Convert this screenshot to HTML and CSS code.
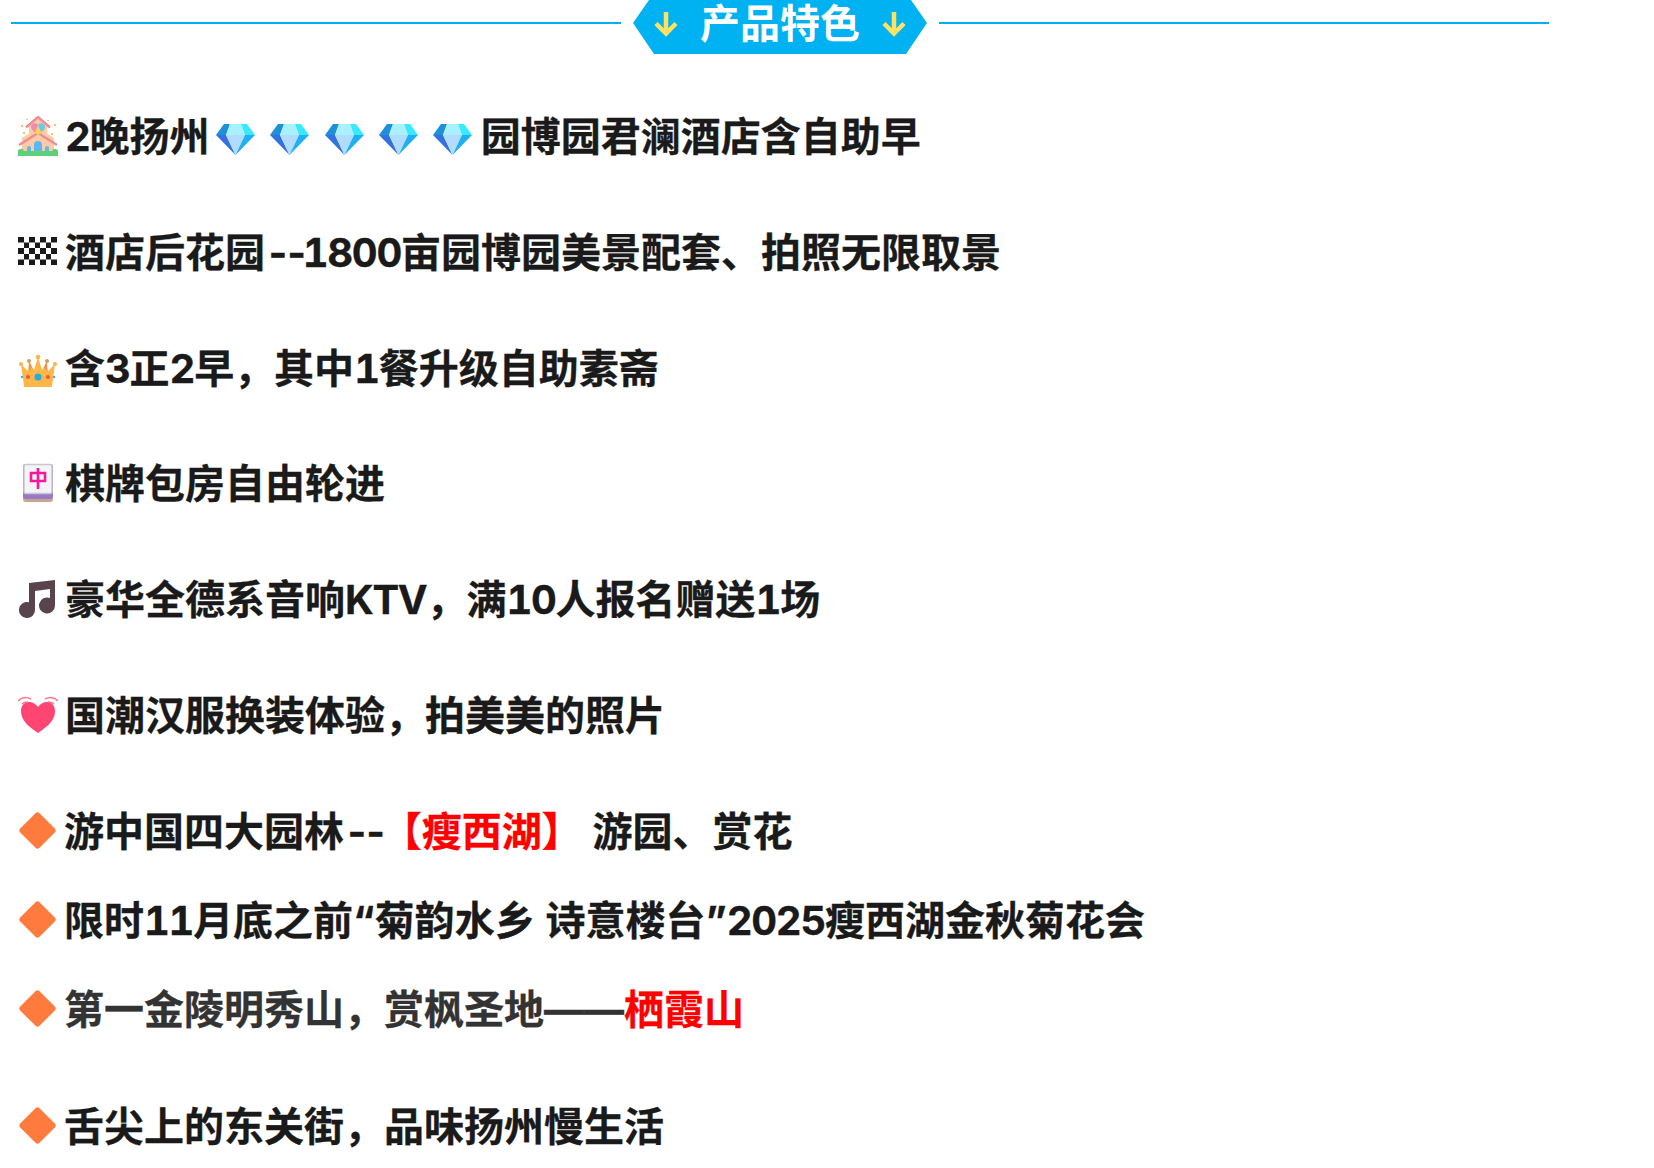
FILE: index.html
```html
<!DOCTYPE html>
<html lang="zh-CN">
<head>
<meta charset="utf-8">
<title>产品特色</title>
<link rel="stylesheet" href="styles.css">
</head>
<body>
<svg class="defs" width="0" height="0" aria-hidden="true">
  <symbol id="gem" viewBox="0 0 39 31">
    <polygon points="8,0 14,0 10,11 0,11" fill="#1c91d9"/>
    <polygon points="14,0 25,0 29,11 10,11" fill="#a9f1ff"/>
    <polygon points="25,0 31,0 39,11 29,11" fill="#39e9ff"/>
    <polygon points="0,11 10,11 19.5,31" fill="#3370e0"/>
    <polygon points="10,11 29,11 19.5,31" fill="#b1dcff"/>
    <polygon points="29,11 39,11 19.5,31" fill="#1eb0f0"/>
  </symbol>
  <symbol id="rhomb" viewBox="0 0 37 37">
    <path d="M16.5 1.2a3 3 0 0 1 4 0L35.8 16.500a3 3 0 0 1 0 4L20.500 35.800a3 3 0 0 1-4 0L1.200 20.500a3 3 0 0 1 0-4Z" fill="#ff7b3d"/>
  </symbol>
  <symbol id="arrow" viewBox="0 0 24 26">
    <path d="M12 1V22" fill="none" stroke="#ffe164" stroke-width="4.500"/>
    <path d="M2 12.500l10 10 10-10" fill="none" stroke="#ffe164" stroke-width="4.500"/>
  </symbol>
</svg>

<header class="banner">
  <span class="rule"></span>
  <h1 class="badge">
    <svg class="arrow"><use href="#arrow"/></svg>
    <span>产品特色</span>
    <svg class="arrow"><use href="#arrow"/></svg>
  </h1>
  <span class="rule"></span>
</header>

<main class="features">
  <p class="row gap">
    <svg class="icon" viewBox="0 0 40 40">
      <path d="M4 37V22L20 12l16 10v15Z" fill="#fdcba4"/>
      <path d="M11 20V10l9-8 9 8v10l-9-5Z" fill="#fdcba4"/>
      <path d="M8 11.500 20 1l12 10.500" fill="none" stroke="#ee8d98" stroke-width="2.500"/>
      <path d="M1 29 20 17l19 12" fill="none" stroke="#ee8d98" stroke-width="2.500"/>
      <path d="M20 9c-2-3-7-2-7 2s4 6 7 8c3-2 7-4 7-8s-5-5-7-2Z" fill="#fbd15b"/>
      <path d="M20 9c-2-3-7-2-7 2 0 2 2 4 4 5Z" fill="#f28bb4"/>
      <path d="M20 9c2-3 7-2 7 2 0 2-2 4-4 5Z" fill="#6cc8f0"/>
      <path d="M16 38V29a4 4 0 0 1 8 0v9ZM9 38v-6a2 2 0 0 1 4 0v6ZM27 38v-6a2 2 0 0 1 4 0v6Z" fill="#5cb8f5"/>
      <path d="M0 40v-3a3 3 0 0 1 6-2h28a3 3 0 0 1 6 2v3Z" fill="#5fd07a"/>
      <path d="M3 9h2v2H3ZM36 8h2v2h-2ZM5 16h2v2H5ZM33 17h2v2h-2ZM8 3h2v1H8ZM29 4h2v1h-2Z" fill="#f7c35f"/>
    </svg>
    <span class="text"><span class="num">2</span>晚扬州</span>
    <span class="gems">
      <svg class="gem"><use href="#gem"/></svg>
      <svg class="gem"><use href="#gem"/></svg>
      <svg class="gem"><use href="#gem"/></svg>
      <svg class="gem"><use href="#gem"/></svg>
      <svg class="gem"><use href="#gem"/></svg>
    </span>
    <span class="text">园博园君澜酒店含自助早</span>
  </p>
  <p class="row gap">
    <svg class="icon" viewBox="0 0 40 40">
      <path fill="#1a1a1a" d="M0 6h6v5.500H0ZM11 6h6v5.500h-6ZM22 6h6v5.500h-6ZM33 6h6v5.500h-6ZM6 11.500h5V17H6ZM17 11.500h5V17h-5ZM28 11.500h5V17h-5ZM0 17h6v6H0ZM11 17h6v6h-6ZM22 17h6v6h-6ZM33 17h6v6h-6ZM6 23h5v5.500H6ZM17 23h5v5.500h-5ZM28 23h5v5.500h-5ZM0 28.500h6V34H0ZM11 28.500h6V34h-6ZM22 28.500h6V34h-6ZM33 28.500h6V34h-6Z"/>
    </svg>
    <span class="text">酒店后花园<span class="dash">--</span><span class="num">1800</span>亩园博园美景配套、拍照无限取景</span>
  </p>
  <p class="row gap">
    <svg class="icon" viewBox="0 -3 40 40">
      <circle cx="3" cy="14" r="2" fill="#ffb54a"/><circle cx="37" cy="14" r="2" fill="#ffb54a"/>
      <circle cx="11" cy="11" r="2" fill="#d99a5b"/><circle cx="29" cy="11" r="2" fill="#d99a5b"/>
      <circle cx="20" cy="7" r="2.200" fill="#ffb54a"/>
      <path d="M3 14l7 7 1-10 5 9 4-13 4 13 5-9 1 10 7-7-3 22a2 2 0 0 1-2 2H8a2 2 0 0 1-2-2Z" fill="#ffb649"/>
      <path d="M11 11l3 6-3 4ZM29 11l-3 6 3 4Z" fill="#d99a5b"/>
      <circle cx="20" cy="27" r="3.500" fill="#1eaee8"/><circle cx="10" cy="27" r="2" fill="#f2533f"/><circle cx="30" cy="27" r="2" fill="#f2533f"/>
      <circle cx="4" cy="27" r="1.200" fill="#2bb7e6"/><circle cx="36" cy="27" r="1.200" fill="#2bb7e6"/>
    </svg>
    <span class="text">含<span class="num">3</span>正<span class="num">2</span>早，其中<span class="num">1</span>餐升级自助素斋</span>
  </p>
  <p class="row gap">
    <svg class="icon" viewBox="0 0 40 40">
      <rect x="5" y="1" width="30" height="38" rx="3" fill="#c6a78d"/>
      <rect x="5" y="1" width="30" height="35" rx="3" fill="#9a78c8"/>
      <rect x="6" y="1.500" width="28" height="29" rx="2" fill="#f4f4f6" stroke="#c8c8ce" stroke-width="1.500"/>
      <path d="M20 5v21M13 10h14v8H13Z" fill="none" stroke="#f6179c" stroke-width="2.600"/>
    </svg>
    <span class="text">棋牌包房自由轮进</span>
  </p>
  <p class="row gap">
    <svg class="icon" viewBox="0 0 40 40">
      <path d="M11 4 37 1V26.500a8 8 0 1 1-5-7.400V10L17 12V31a8 8 0 1 1-6-7.700Z" fill="#59444d"/>
    </svg>
    <span class="text">豪华全德系音响<span class="num">KTV</span>，满<span class="num">10</span>人报名赠送<span class="num">1</span>场</span>
  </p>
  <p class="row gap">
    <svg class="icon" viewBox="0 -2 40 40">
      <path d="M20 37C8 29 3 23 3 15c0-6 4-9 8-9 4 0 7 2 9 5 2-3 5-5 9-5 4 0 8 3 8 9 0 8-5 14-17 22Z" fill="#ff4673"/>
      <path d="M0 5c4-4 9-4 13-2M4 8c2-2 4-2 6-2M40 5c-4-4-9-4-13-2M36 8c-2-2-4-2-6-2" fill="none" stroke="#f7768f" stroke-width="1.500"/>
    </svg>
    <span class="text">国潮汉服换装体验，拍美美的照片</span>
  </p>
  <p class="row">
    <svg class="rhomb"><use href="#rhomb"/></svg>
    <span class="text">游中国四大园林<span class="dash">--</span><em class="hot">【瘦西湖】</em> 游园、赏花</span>
  </p>
  <p class="row">
    <svg class="rhomb"><use href="#rhomb"/></svg>
    <span class="text">限时<span class="num">11</span>月底之前“菊韵水乡 诗意楼台”<span class="num">2025</span>瘦西湖金秋菊花会</span>
  </p>
  <p class="row wide">
    <svg class="rhomb"><use href="#rhomb"/></svg>
    <span class="text soft">第一金陵明秀山，赏枫圣地——<em class="hot">栖霞山</em></span>
  </p>
  <p class="row">
    <svg class="rhomb"><use href="#rhomb"/></svg>
    <span class="text">舌尖上的东关街，品味扬州慢生活</span>
  </p>
</main>
</body>
</html>
```

FILE: styles.css
```css
html, body {
  margin: 0;
  padding: 0;
  background: #fff;
  overflow: hidden;
}
body {
  font-family: Inter, "Noto Sans CJK SC", sans-serif;
  color: #1a1a1a;
}
.defs {
  position: absolute;
}
.banner {
  display: flex;
  align-items: flex-start;
  width: 1538px;
  margin-left: 11px;
  gap: 12px;
}
.rule {
  flex: 1;
  height: 2px;
  margin-top: 22px;
  background: #00b0f0;
}
.badge {
  display: flex;
  align-items: center;
  justify-content: center;
  gap: 22px;
  width: 294px;
  height: 54px;
  margin: 0;
  padding-bottom: 6px;
  box-sizing: border-box;
  background: #00b2f2;
  color: #fff;
  font-size: 40px;
  font-weight: 700;
  line-height: 46px;
  clip-path: polygon(16px 0, 278px 0, 294px 23px, 273px 54px, 21px 54px, 0 23px);
}
.arrow {
  width: 24px;
  height: 26px;
}
.features {
  margin-top: 37px;
  padding-left: 18px;
}
.row {
  display: flex;
  align-items: center;
  height: 89px;
  margin: 0;
  font-size: 40px;
  font-weight: 700;
  line-height: 48px;
  white-space: pre;
  font-variant-numeric: tabular-nums;
  font-kerning: none;
}
.text {
  padding-top: 3px;
  -webkit-text-stroke: 0.3px currentColor;
}
.dash {
  letter-spacing: -7px;
}
.num {
  letter-spacing: -1.3px;
}
.gap {
  margin-bottom: 26.8px;
}
.wide {
  margin-bottom: 28px;
}
.icon {
  flex: none;
  width: 40px;
  height: 40px;
  margin-right: 7px;
}
.rhomb {
  flex: none;
  width: 37px;
  height: 37px;
  margin: 0 8px 0 1px;
}
.gems {
  display: flex;
  gap: 15.3px;
  margin: 8px 8.5px 0 6.5px;
}
.gem {
  width: 39px;
  height: 31px;
}
.soft {
  color: #333;
}
.hot {
  color: #f00;
  font-style: normal;
}
```
